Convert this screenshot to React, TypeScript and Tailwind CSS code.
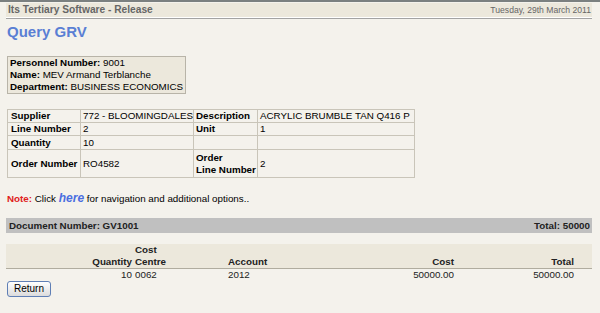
import * as React from "react";

const cell = "border border-[#c9c5b9] px-[2px] py-0 align-middle whitespace-nowrap overflow-hidden";
const label = `${cell} font-bold`;

const lines = [
  { qty: "10", centre: "0062", account: "2012", cost: "50000.00", total: "50000.00" },
];

export default function App() {
  return (
    <div className="min-h-[313px] bg-[#f4f2ec] font-['Liberation_Sans',Arial,sans-serif] text-[9.8px] leading-[12px] text-black">
      <div className="h-[2px] bg-[#7b8080]" />
      <div className="pl-[6px] pr-[8px]">
        <div className="mt-[1px] flex h-[14px] items-center justify-between bg-[#ece8dc] pl-[2px] pr-[1px]">
          <span className="text-[10.2px] font-bold text-[#666]">Its Tertiary Software - Release</span>
          <span className="text-[8.6px] text-[#666]">Tuesday, 29th March 2011</span>
        </div>
        <div className="h-[1px] bg-white" />
        <div className="h-[1px] bg-[#a3a3a3]" />

        <div className="pl-[1px]">
          <h1 className="mt-[4px] text-[15px] leading-[18px] font-bold text-[#5a7fd4]">Query GRV</h1>

          <div className="mt-[15px] inline-block border border-[#b8b4a8] bg-[#ece8dc] px-[2px]">
            <div>
              <b>Personnel Number:</b> 9001
            </div>
            <div>
              <b>Name:</b> MEV Armand Terblanche
            </div>
            <div>
              <b>Department:</b> BUSINESS ECONOMICS
            </div>
          </div>

          <table className="mt-[15px] table-fixed border-collapse border border-[#b8b4a8] w-[407px]">
            <colgroup>
              <col className="w-[73px]" />
              <col className="w-[113px]" />
              <col className="w-[64px]" />
              <col className="w-[157px]" />
            </colgroup>
            <tbody>
              <tr className="h-[13px]">
                <td className={`${label} pl-[3px]`}>Supplier</td>
                <td className={cell}>772 - BLOOMINGDALES</td>
                <td className={label}>Description</td>
                <td className={cell}>ACRYLIC BRUMBLE TAN Q416 P</td>
              </tr>
              <tr className="h-[13px]">
                <td className={`${label} pl-[3px]`}>Line Number</td>
                <td className={cell}>2</td>
                <td className={label}>Unit</td>
                <td className={cell}>1</td>
              </tr>
              <tr className="h-[14px]">
                <td className={`${label} pl-[3px]`}>Quantity</td>
                <td className={cell}>10</td>
                <td className={label}></td>
                <td className={cell}></td>
              </tr>
              <tr className="h-[28px]">
                <td className={`${label} pl-[3px]`}>Order Number</td>
                <td className={cell}>RO4582</td>
                <td className={label}>
                  Order
                  <br />
                  Line Number
                </td>
                <td className={cell}>2</td>
              </tr>
            </tbody>
          </table>

          <p className="mt-[13px] leading-[14px]">
            <b className="text-[#e02020]">Note:</b> Click{" "}
            <i className="text-[12px] font-bold text-[#4a6ee0]">here</i> for navigation and additional options..
          </p>
        </div>

        <div className="mt-[12px] flex h-[15px] items-center justify-between bg-[#c0c0c0] pl-[3px] pr-[2px] font-bold text-[#222]">
          <span>Document Number: GV1001</span>
          <span>Total: 50000</span>
        </div>

        <div className="mt-[11px] grid grid-cols-[128px_94px_150px_77px_120px_1fr] items-end border-b border-[#b0ac9f] bg-[#ece8dc] font-bold text-[#222] h-[25px]">
          <span className="pr-[2px] text-right">Quantity</span>
          <span className="pl-[1px]">
            Cost
            <br />
            Centre
          </span>
          <span>Account</span>
          <span className="pr-[1px] text-right">Cost</span>
          <span className="pr-[1px] text-right">Total</span>
          <span />
        </div>
        {lines.map((l, i) => (
          <div key={i} className="grid grid-cols-[128px_94px_150px_77px_120px_1fr] text-[#222]">
            <span className="pr-[2px] text-right">{l.qty}</span>
            <span className="pl-[1px]">{l.centre}</span>
            <span>{l.account}</span>
            <span className="pr-[1px] text-right">{l.cost}</span>
            <span className="pr-[1px] text-right">{l.total}</span>
            <span />
          </div>
        ))}

        <button className="ml-[1px] block h-[16px] w-[44px] rounded-[3px] border border-[#5f7fb5] bg-gradient-to-b from-white to-[#dcdcdc] text-[10px] leading-[12px] text-black">
          Return
        </button>
      </div>
    </div>
  );
}
